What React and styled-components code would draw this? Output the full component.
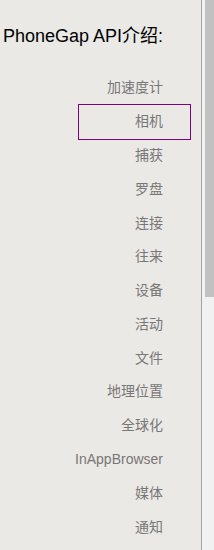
import React from "react";
import styled, { createGlobalStyle } from "styled-components";

const GlobalStyle = createGlobalStyle`
  html, body {
    margin: 0;
    padding: 0;
    height: 100%;
    overflow: hidden;
  }
  body {
    background: #ebe9e6;
    font-family: "Liberation Sans", Arial, "Noto Sans CJK SC", sans-serif;
  }
`;

const Page = styled.div`
  display: flex;
  height: 550px;
  width: 214px;
`;

const Sidebar = styled.div`
  width: 201px;
  border-right: 1px solid #a3a3a3;
  display: flex;
  flex-direction: column;
  background: #ebe9e6;
`;

const Heading = styled.h2`
  margin: 0;
  padding: 26px 0 0 3px;
  font-size: 18px;
  font-weight: 400;
  color: #000;
  white-space: nowrap;
  line-height: 21px;
`;

const Nav = styled.ul`
  list-style: none;
  margin: 24px 11px 0 0;
  padding: 0;
  align-self: flex-end;
  width: 111px;
`;

const NavItem = styled.li`
  display: flex;
  justify-content: flex-end;
  padding: 8.4px 27px 8.4px 0;
  line-height: 17px;
  font-size: 14px;
  color: #777;
  white-space: nowrap;
  outline: ${(p) => (p.$active ? "1px solid #800080" : "none")};
  outline-offset: 0;
`;

const Scrollbar = styled.div`
  flex: 1;
  background: #f1f1f1;
  padding-left: 3px;
`;

const Thumb = styled.div`
  height: 297px;
  background: #c1c1c1;
`;

const items = [
  "加速度计",
  "相机",
  "捕获",
  "罗盘",
  "连接",
  "往来",
  "设备",
  "活动",
  "文件",
  "地理位置",
  "全球化",
  "InAppBrowser",
  "媒体",
  "通知",
];

const App = () => {
  return (
    <>
      <GlobalStyle />
      <Page>
        <Sidebar>
          <Heading>PhoneGap API介绍:</Heading>
          <Nav>
            {items.map((item, i) => (
              <NavItem key={item} $active={i === 1}>
                {item}
              </NavItem>
            ))}
          </Nav>
        </Sidebar>
        <Scrollbar>
          <Thumb />
        </Scrollbar>
      </Page>
    </>
  );
};

export default App;
